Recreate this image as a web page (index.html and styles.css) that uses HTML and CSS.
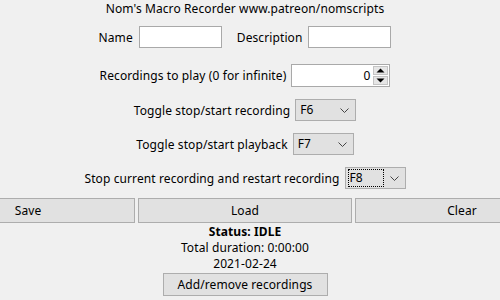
FILE: index.html
```html
<!DOCTYPE html>
<html lang="en">
<head>
    <meta charset="UTF-8">
    <meta name="viewport" content="width=device-width, initial-scale=1.0">
    <title>Nom's Macro Recorder</title>
    <link rel="stylesheet" href="styles.css">
</head>
<body>

    <div class="window">
        <div class="title">Nom's Macro Recorder www.patreon/nomscripts</div>

        <div class="row row-names">
            <span class="label">Name</span>
            <div class="entry"></div>
            <span class="label">Description</span>
            <div class="entry"></div>
        </div>

        <div class="row row-spin">
            <span class="label">Recordings to play (0 for infinite)</span>
            <div class="spinbox">
                <span class="spin-value">0</span>
                <div class="spin-arrows">
                    <div class="spin-btn">
                        <svg width="9" height="5" viewBox="0 0 9 5"><path d="M0.5 4.5 L4.5 0.5 L8.5 4.5 Z" fill="#000"/></svg>
                    </div>
                    <div class="spin-btn">
                        <svg width="9" height="5" viewBox="0 0 9 5"><path d="M0.5 0.5 L4.5 4.5 L8.5 0.5 Z" fill="#000"/></svg>
                    </div>
                </div>
            </div>
        </div>

        <div class="row row-combo">
            <span class="label">Toggle stop/start recording</span>
            <div class="combo">
                <span class="combo-text">F6</span>
                <svg class="chevron" width="9" height="5" viewBox="0 0 9 5"><path d="M0.5 0.5 L4.5 4.5 L8.5 0.5" fill="none" stroke="#444" stroke-width="1"/></svg>
            </div>
        </div>

        <div class="row row-combo">
            <span class="label">Toggle stop/start playback</span>
            <div class="combo">
                <span class="combo-text">F7</span>
                <svg class="chevron" width="9" height="5" viewBox="0 0 9 5"><path d="M0.5 0.5 L4.5 4.5 L8.5 0.5" fill="none" stroke="#444" stroke-width="1"/></svg>
            </div>
        </div>

        <div class="row row-combo">
            <span class="label">Stop current recording and restart recording</span>
            <div class="combo">
                <span class="combo-text focused">F8</span>
                <svg class="chevron" width="9" height="5" viewBox="0 0 9 5"><path d="M0.5 0.5 L4.5 4.5 L8.5 0.5" fill="none" stroke="#444" stroke-width="1"/></svg>
            </div>
        </div>

        <div class="buttons-row">
            <div class="button">Save</div>
            <div class="button">Load</div>
            <div class="button">Clear</div>
        </div>

        <div class="status">
            <div class="status-line bold">Status: IDLE</div>
            <div class="status-line">Total duration: 0:00:00</div>
            <div class="status-line">2021-02-24</div>
        </div>

        <div class="bottom-row">
            <div class="button button-small">Add/remove recordings</div>
        </div>
    </div>

</body>
</html>
```

FILE: styles.css
```css
body {
    margin: 0;
    background: #f0f0f0;
    overflow: hidden;
    font-family: "Noto Sans", "Liberation Sans", sans-serif;
    font-size: 12px;
    letter-spacing: 0.1px;
    color: #000;
}

/* the real window is wider than the shot, so it overflows both sides */
.window {
    width: 648px;
    margin-left: -79px;
    display: flex;
    flex-direction: column;
}

.title {
    height: 18px;
    line-height: 18px;
    text-align: center;
}

.row {
    display: flex;
    justify-content: center;
    align-items: center;
    gap: 5px;
}

.row-names {
    margin-top: 8px;
    height: 22px;
}

.row-names .entry + .label {
    margin-left: 10px;
}

.entry {
    width: 81px;
    height: 20px;
    background: #fff;
    border: 1px solid #a9a9a9;
    margin-left: 1px;
}

.row-spin {
    margin-top: 16px;
    height: 23px;
}

.spinbox {
    width: 97px;
    height: 21px;
    background: #fff;
    border: 1px solid #a9a9a9;
    display: flex;
    align-items: center;
}

.spin-value {
    flex: 1;
    text-align: right;
    padding-right: 3px;
}

.spin-arrows {
    width: 15px;
    height: 19px;
    display: flex;
    flex-direction: column;
    gap: 1px;
    margin-right: 1px;
}

.spin-btn {
    flex: 1;
    background: #e6e6e6;
    border: 1px solid #c4c4c4;
    display: flex;
    align-items: center;
    justify-content: center;
}

.row-combo {
    margin-top: 12px;
    height: 22px;
}

.combo {
    width: 57px;
    height: 20px;
    background: #e1e1e1;
    border: 1px solid #adadad;
    display: flex;
    align-items: center;
    padding-left: 2px;
    box-sizing: content-box;
}

.combo-text {
    flex: 1;
    padding-left: 2px;
    line-height: 16px;
}

.combo-text.focused {
    flex: none;
    width: 33px;
    border: 1px dotted #000;
    padding-left: 1px;
}

.combo-text.focused + .chevron {
    margin-left: auto;
}

.chevron {
    margin-right: 6px;
}

.buttons-row {
    margin-top: 9px;
    display: flex;
    gap: 3px;
}

.button {
    height: 23px;
    line-height: 23px;
    background: #e1e1e1;
    border: 1px solid #adadad;
    text-align: center;
}

.buttons-row .button {
    flex: 1;
}

.status {
    margin-top: 1px;
    text-align: center;
}

.status-line {
    height: 16px;
    line-height: 16px;
}

.bold {
    font-weight: bold;
}

.bottom-row {
    display: flex;
    justify-content: center;
    margin-top: 1px;
}

.button-small {
    width: 163px;
    height: 21px;
    line-height: 21px;
}
```
